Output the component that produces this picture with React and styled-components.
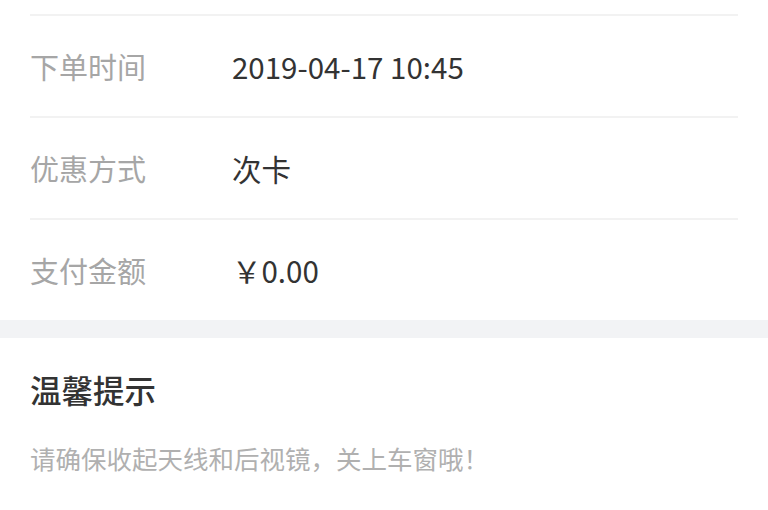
import styled, { createGlobalStyle } from "styled-components";

const GlobalStyle = createGlobalStyle`
  html, body {
    margin: 0;
    padding: 0;
    background: #ffffff;
    font-family: "Noto Sans CJK SC", "Noto Sans", sans-serif;
  }
`;

const orderInfo = [
  { label: "下单时间", value: "2019-04-17 10:45" },
  { label: "优惠方式", value: "次卡" },
  { label: "支付金额", value: "￥0.00" },
];

const Page = styled.div`
  width: 768px;
  height: 510px;
  overflow: hidden;
  background: #fff;
`;

const InfoList = styled.div`
  padding: 14px 30px 0;
`;

const Row = styled.div`
  display: flex;
  align-items: center;
  height: 100px;
  border-top: 2px solid #f2f2f2;
`;

const Label = styled.span`
  width: 202px;
  font-size: 29px;
  color: #a6a6a6;
`;

const Value = styled.span`
  font-size: 29.5px;
  color: #333;
`;

const Gap = styled.div`
  height: 18px;
  background: #f2f3f5;
`;

const Tips = styled.div`
  padding: 30px 30px 0;
`;

const TipTitle = styled.h3`
  margin: 0;
  font-size: 31.5px;
  line-height: 42px;
  font-weight: 500;
  color: #333;
`;

const TipText = styled.p`
  margin: 30px 0 0;
  font-size: 25.5px;
  line-height: 36px;
  color: #b0b0b0;
`;

const App = () => {
  return (
    <Page>
      <GlobalStyle />
      <InfoList>
        {orderInfo.map((item) => (
          <Row key={item.label}>
            <Label>{item.label}</Label>
            <Value>{item.value}</Value>
          </Row>
        ))}
      </InfoList>
      <Gap />
      <Tips>
        <TipTitle>温馨提示</TipTitle>
        <TipText>请确保收起天线和后视镜，关上车窗哦！</TipText>
      </Tips>
    </Page>
  );
};

export default App;
